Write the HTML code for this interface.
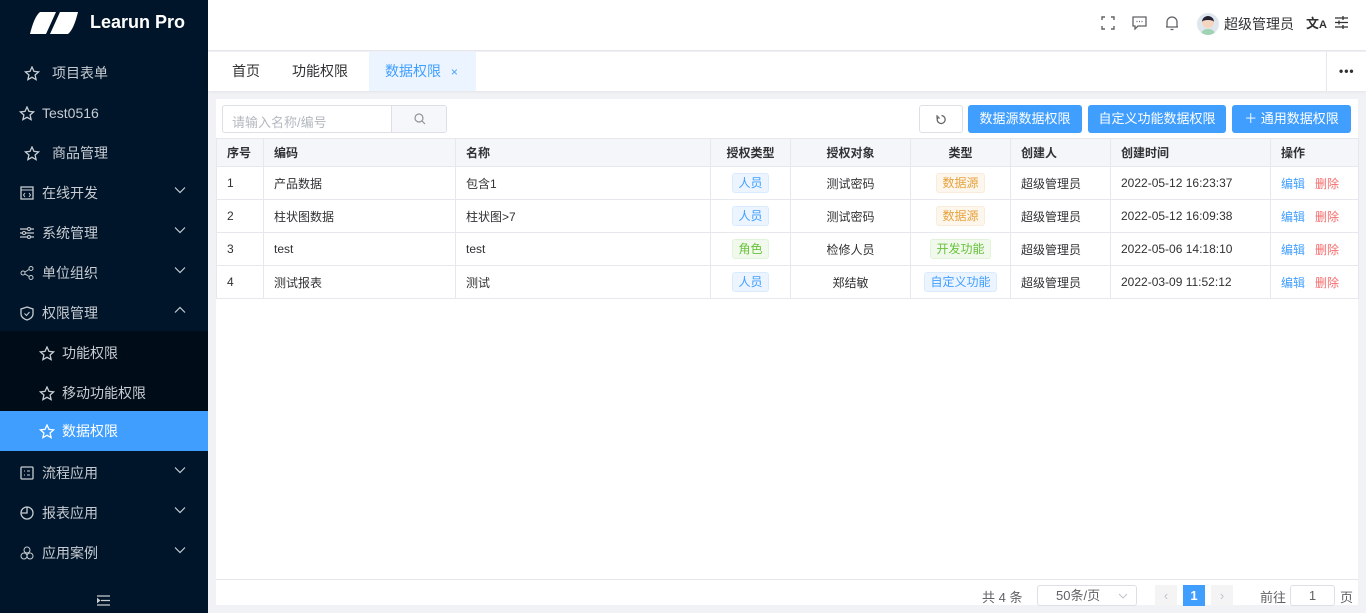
<!DOCTYPE html>
<html><head><meta charset="utf-8"><style>
*{box-sizing:border-box;margin:0;padding:0}
body{width:1366px;height:613px;overflow:hidden;font-family:"Liberation Sans","Noto Sans CJK SC",sans-serif;font-size:13px;color:#303133;background:#f0f2f5;position:relative}
.abs{position:absolute}
#side{left:0;top:0;width:208px;height:613px;background:#001529;color:#c0c4cc}
.mi{position:absolute;left:0;width:208px;height:40px;line-height:40px;font-size:14px;color:#c8ccd2}
.mi svg{position:absolute;top:13px}
.chev{position:absolute;right:22px;top:14px;width:12px;height:8px}
#hdr{left:208px;top:0;width:1158px;height:51px;background:#fff;border-bottom:1px solid #e4e7ed}
#tabs{left:208px;top:52px;width:1158px;height:39px;background:#fff;box-shadow:0 1px 3px rgba(0,0,0,.06)}
.tab{position:absolute;top:0;height:39px;line-height:39px;font-size:14px;color:#303133}
#card{left:216px;top:99px;width:1142px;height:506px;background:#fff}
.btn{position:absolute;top:6px;height:28px;line-height:28px;border-radius:3px;background:#409eff;color:#fff;font-size:13px;text-align:center}
table{border-collapse:collapse;position:absolute;left:0;top:39px;width:1142px;table-layout:fixed}
td,th{border:1px solid #e6e8ee;height:33px;padding:0 10px;font-size:12px;text-align:left;font-weight:normal;white-space:nowrap;vertical-align:middle}
th{height:28px;background:#f4f6f9;font-weight:bold;color:#303133}
.c{text-align:center}
.tag{display:inline-block;height:20px;line-height:18px;padding:0 5px;border:1px solid;border-radius:3px;font-size:12px}
.b{color:#409eff;background:#ecf5ff;border-color:#d9ecff}
.o{color:#e6a23c;background:#fdf6ec;border-color:#faecd8}
.g{color:#67c23a;background:#f0f9eb;border-color:#e1f3d8}
.e{color:#409eff;margin-right:10px}.d{color:#f56c6c}
</style></head><body>
<div id="side" class="abs">
 <svg class="abs" style="left:30px;top:12px" width="48" height="22" viewBox="0 0 48 22"><path d="M10 0H26L16 22H0C2 14 5 4 10 0Z" fill="#fff"/><path d="M30 0H48C46 8 43 18 38 22H20Z" fill="#fff"/></svg>
 <div class="abs" style="left:90px;top:12px;font-size:18px;font-weight:bold;color:#fff">Learun Pro</div>
 <div class="mi" style="top:53px"><svg style="left:24px" width="16" height="15" viewBox="0 0 16 15"><path d="M8 1l2 4.4 4.6.5-3.5 3.1 1 4.6L8 11.3 3.9 13.6l1-4.6L1.4 5.9 6 5.4z" fill="none" stroke="#c8ccd2" stroke-width="1.3"/></svg><span style="position:absolute;left:52px">项目表单</span></div>
 <div class="mi" style="top:93px"><svg style="left:19px" width="16" height="15" viewBox="0 0 16 15"><path d="M8 1l2 4.4 4.6.5-3.5 3.1 1 4.6L8 11.3 3.9 13.6l1-4.6L1.4 5.9 6 5.4z" fill="none" stroke="#c8ccd2" stroke-width="1.3"/></svg><span style="position:absolute;left:42px">Test0516</span></div>
 <div class="mi" style="top:133px"><svg style="left:24px" width="16" height="15" viewBox="0 0 16 15"><path d="M8 1l2 4.4 4.6.5-3.5 3.1 1 4.6L8 11.3 3.9 13.6l1-4.6L1.4 5.9 6 5.4z" fill="none" stroke="#c8ccd2" stroke-width="1.3"/></svg><span style="position:absolute;left:52px">商品管理</span></div>
 <div class="mi" style="top:173px"><svg style="left:20px" width="14" height="14" viewBox="0 0 14 14"><rect x="1" y="1" width="12" height="12" fill="none" stroke="#c8ccd2" stroke-width="1.3"/><path d="M1 4h12M5 7l-1.5 2 1.5 2M9 7l1.5 2-1.5 2" fill="none" stroke="#c8ccd2"/></svg><span style="position:absolute;left:42px">在线开发</span><svg class="chev" viewBox="0 0 12 8"><path d="M1 1.5l5 5 5-5" fill="none" stroke="#c8ccd2" stroke-width="1.2"/></svg></div>
 <div class="mi" style="top:213px"><svg style="left:20px" width="14" height="14" viewBox="0 0 14 14"><path d="M0 3h14M0 7h14M0 11h14" stroke="#c8ccd2" stroke-width="1.3"/><circle cx="9" cy="3" r="1.5" fill="#001529" stroke="#c8ccd2"/><circle cx="4" cy="7" r="1.5" fill="#001529" stroke="#c8ccd2"/><circle cx="9" cy="11" r="1.5" fill="#001529" stroke="#c8ccd2"/></svg><span style="position:absolute;left:42px">系统管理</span><svg class="chev" viewBox="0 0 12 8"><path d="M1 1.5l5 5 5-5" fill="none" stroke="#c8ccd2" stroke-width="1.2"/></svg></div>
 <div class="mi" style="top:253px"><svg style="left:20px" width="14" height="14" viewBox="0 0 14 14"><circle cx="3" cy="7" r="2" fill="none" stroke="#c8ccd2"/><circle cx="11" cy="2.5" r="2" fill="none" stroke="#c8ccd2"/><circle cx="11" cy="11.5" r="2" fill="none" stroke="#c8ccd2"/><path d="M5 6l4-2.5M5 8l4 2.5" stroke="#c8ccd2"/></svg><span style="position:absolute;left:42px">单位组织</span><svg class="chev" viewBox="0 0 12 8"><path d="M1 1.5l5 5 5-5" fill="none" stroke="#c8ccd2" stroke-width="1.2"/></svg></div>
 <div class="mi" style="top:293px"><svg style="left:20px" width="14" height="15" viewBox="0 0 14 15"><path d="M7 1l6 2v5c0 3-3 5-6 6-3-1-6-3-6-6V3z" fill="none" stroke="#c8ccd2" stroke-width="1.3"/><path d="M4.5 7.5l2 2 3-3.5" fill="none" stroke="#c8ccd2"/></svg><span style="position:absolute;left:42px">权限管理</span><svg class="chev" viewBox="0 0 12 8"><path d="M1 6.5l5-5 5 5" fill="none" stroke="#c8ccd2" stroke-width="1.2"/></svg></div>
 <div class="abs" style="left:0;top:331px;width:208px;height:80px;background:#000c17"></div>
 <div class="mi" style="top:333px"><svg style="left:39px" width="16" height="15" viewBox="0 0 16 15"><path d="M8 1l2 4.4 4.6.5-3.5 3.1 1 4.6L8 11.3 3.9 13.6l1-4.6L1.4 5.9 6 5.4z" fill="none" stroke="#c8ccd2" stroke-width="1.3"/></svg><span style="position:absolute;left:62px">功能权限</span></div>
 <div class="mi" style="top:373px"><svg style="left:39px" width="16" height="15" viewBox="0 0 16 15"><path d="M8 1l2 4.4 4.6.5-3.5 3.1 1 4.6L8 11.3 3.9 13.6l1-4.6L1.4 5.9 6 5.4z" fill="none" stroke="#c8ccd2" stroke-width="1.3"/></svg><span style="position:absolute;left:62px">移动功能权限</span></div>
 <div class="mi" style="top:411px;background:#409eff;color:#fff"><svg style="left:39px" width="16" height="15" viewBox="0 0 16 15"><path d="M8 1l2 4.4 4.6.5-3.5 3.1 1 4.6L8 11.3 3.9 13.6l1-4.6L1.4 5.9 6 5.4z" fill="none" stroke="#fff" stroke-width="1.3"/></svg><span style="position:absolute;left:62px">数据权限</span></div>
 <div class="mi" style="top:453px"><svg style="left:20px" width="14" height="14" viewBox="0 0 14 14"><rect x="1" y="1" width="12" height="12" rx="1" fill="none" stroke="#c8ccd2" stroke-width="1.3"/><path d="M4 5h1M4 9h1M7 5h3M7 9h3" stroke="#c8ccd2"/></svg><span style="position:absolute;left:42px">流程应用</span><svg class="chev" viewBox="0 0 12 8"><path d="M1 1.5l5 5 5-5" fill="none" stroke="#c8ccd2" stroke-width="1.2"/></svg></div>
 <div class="mi" style="top:493px"><svg style="left:20px" width="14" height="14" viewBox="0 0 14 14"><circle cx="7" cy="7" r="6" fill="none" stroke="#c8ccd2" stroke-width="1.3"/><path d="M7 1v6H1" fill="none" stroke="#c8ccd2" stroke-width="1.3"/></svg><span style="position:absolute;left:42px">报表应用</span><svg class="chev" viewBox="0 0 12 8"><path d="M1 1.5l5 5 5-5" fill="none" stroke="#c8ccd2" stroke-width="1.2"/></svg></div>
 <div class="mi" style="top:533px"><svg style="left:20px" width="14" height="14" viewBox="0 0 14 14"><circle cx="7" cy="4" r="3" fill="none" stroke="#c8ccd2"/><circle cx="4" cy="10" r="3" fill="none" stroke="#c8ccd2"/><circle cx="10" cy="10" r="3" fill="none" stroke="#c8ccd2"/></svg><span style="position:absolute;left:42px">应用案例</span><svg class="chev" viewBox="0 0 12 8"><path d="M1 1.5l5 5 5-5" fill="none" stroke="#c8ccd2" stroke-width="1.2"/></svg></div>
 <svg class="abs" style="left:97px;top:595px" width="13" height="11" viewBox="0 0 13 11"><path d="M0 1h13M4 5.5h9M0 10h13M0 3.5l2.5 2-2.5 2z" stroke="#c8ccd2" stroke-width="1.3" fill="#c8ccd2"/></svg>
</div>
<div id="hdr" class="abs">
 <svg class="abs" style="left:893px;top:16px" width="14" height="14" viewBox="0 0 14 14"><path d="M1 4V1h3M10 1h3v3M13 10v3h-3M4 13H1v-3" fill="none" stroke="#606266" stroke-width="1.4"/></svg>
 <svg class="abs" style="left:924px;top:16px" width="15" height="14" viewBox="0 0 15 14"><path d="M1 1h13v9H6l-3 3v-3H1z" fill="none" stroke="#606266" stroke-width="1.3"/><path d="M4.5 5.5h1M7 5.5h1M9.5 5.5h1" stroke="#606266" stroke-width="1.3"/></svg>
 <svg class="abs" style="left:957px;top:15px" width="14" height="16" viewBox="0 0 14 16"><path d="M2 12V7a5 5 0 0 1 10 0v5H1h12M5.5 14.5h3" fill="none" stroke="#606266" stroke-width="1.3"/></svg>
 <div class="abs" style="left:989px;top:13px;width:22px;height:22px;border-radius:50%;background:#dfe6ee;overflow:hidden"><div style="position:absolute;left:5px;top:3px;width:12px;height:12px;border-radius:50%;background:#f5d5c0;border-top:4px solid #223"></div><div style="position:absolute;left:4px;top:16px;width:14px;height:8px;background:#9fd3b2;border-radius:6px 6px 0 0"></div></div>
 <div class="abs" style="left:1016px;top:14px;font-size:14px;color:#303133">超级管理员</div>
 <div class="abs" style="left:1098px;top:13px;font-size:13px;font-weight:bold;color:#303133">文<span style="font-size:11px">A</span></div>
 <svg class="abs" style="left:1127px;top:16px" width="13" height="13" viewBox="0 0 13 13"><path d="M0 2h13M0 6.5h13M0 11h13" stroke="#303133" stroke-width="1.3"/><path d="M8 0v4M4 4.5v4M8 9v4" stroke="#303133" stroke-width="1.3"/></svg>
</div>
<div id="tabs" class="abs">
 <div class="tab" style="left:24px">首页</div>
 <div class="tab" style="left:84px">功能权限</div>
 <div class="tab" style="left:161px;width:107px;background:#ecf5ff;color:#409eff;padding-left:16px">数据权限 <span style="font-size:12px;margin-left:6px">×</span></div>
 <div class="abs" style="left:1118px;top:0;width:1px;height:39px;background:#e4e7ed"></div>
 <div class="tab" style="left:1131px;font-weight:bold;letter-spacing:1px;font-size:12px">•••</div>
</div>
<div id="card" class="abs">
 <div class="abs" style="left:6px;top:6px;width:225px;height:28px;border:1px solid #dcdfe6;border-radius:3px;overflow:hidden"><span style="position:absolute;left:9px;top:6px;color:#b4b8bf;font-size:13px">请输入名称/编号</span><div style="position:absolute;left:168px;top:0;width:56px;height:26px;background:#f5f7fa;border-left:1px solid #dcdfe6"><svg style="position:absolute;left:22px;top:7px" width="12" height="12" viewBox="0 0 12 12"><circle cx="5" cy="5" r="4" fill="none" stroke="#909399" stroke-width="1.2"/><path d="M8 8l3 3" stroke="#909399" stroke-width="1.2"/></svg></div></div>
 <div class="abs" style="left:703px;top:6px;width:44px;height:28px;border:1px solid #dcdfe6;border-radius:3px"><svg style="position:absolute;left:16px;top:8px" width="11" height="11" viewBox="0 0 11 11"><path d="M2.5 2.5A4 4 0 1 0 5.5 1.5" fill="none" stroke="#606266" stroke-width="1.2"/><path d="M1 1v3h3" fill="none" stroke="#606266" stroke-width="1.1"/></svg></div>
 <div class="btn" style="left:752px;width:114px">数据源数据权限</div>
 <div class="btn" style="left:872px;width:138px">自定义功能数据权限</div>
 <div class="btn" style="left:1016px;width:119px">＋ 通用数据权限</div>
 <table>
  <colgroup><col style="width:47px"><col style="width:192px"><col style="width:255px"><col style="width:80px"><col style="width:120px"><col style="width:100px"><col style="width:100px"><col style="width:160px"><col style="width:88px"></colgroup>
  <tr><th>序号</th><th>编码</th><th>名称</th><th class="c">授权类型</th><th class="c">授权对象</th><th class="c">类型</th><th>创建人</th><th>创建时间</th><th>操作</th></tr>
  <tr><td>1</td><td>产品数据</td><td>包含1</td><td class="c"><span class="tag b">人员</span></td><td class="c">测试密码</td><td class="c"><span class="tag o">数据源</span></td><td>超级管理员</td><td>2022-05-12 16:23:37</td><td><span class="e">编辑</span><span class="d">删除</span></td></tr>
  <tr><td>2</td><td>柱状图数据</td><td>柱状图&gt;7</td><td class="c"><span class="tag b">人员</span></td><td class="c">测试密码</td><td class="c"><span class="tag o">数据源</span></td><td>超级管理员</td><td>2022-05-12 16:09:38</td><td><span class="e">编辑</span><span class="d">删除</span></td></tr>
  <tr><td>3</td><td>test</td><td>test</td><td class="c"><span class="tag g">角色</span></td><td class="c">检修人员</td><td class="c"><span class="tag g">开发功能</span></td><td>超级管理员</td><td>2022-05-06 14:18:10</td><td><span class="e">编辑</span><span class="d">删除</span></td></tr>
  <tr><td>4</td><td>测试报表</td><td>测试</td><td class="c"><span class="tag b">人员</span></td><td class="c">郑结敏</td><td class="c"><span class="tag b">自定义功能</span></td><td>超级管理员</td><td>2022-03-09 11:52:12</td><td><span class="e">编辑</span><span class="d">删除</span></td></tr>
 </table>
 <div class="abs" style="left:0;top:480px;width:1142px;height:1px;background:#e4e7ed"></div>
 <div class="abs" style="left:766px;top:488px;color:#606266">共 4 条</div>
 <div class="abs" style="left:821px;top:486px;width:100px;height:21px;border:1px solid #dcdfe6;border-radius:3px;color:#606266;padding-left:18px;line-height:19px">50条/页<svg style="position:absolute;right:8px;top:7px" width="10" height="6" viewBox="0 0 10 6"><path d="M1 1l4 4 4-4" fill="none" stroke="#c0c4cc"/></svg></div>
 <div class="abs" style="left:939px;top:486px;width:22px;height:21px;background:#f4f4f5;color:#c0c4cc;text-align:center;line-height:21px">‹</div>
 <div class="abs" style="left:967px;top:486px;width:22px;height:21px;background:#409eff;color:#fff;font-weight:bold;text-align:center;line-height:21px">1</div>
 <div class="abs" style="left:995px;top:486px;width:22px;height:21px;background:#f4f4f5;color:#c0c4cc;text-align:center;line-height:21px">›</div>
 <div class="abs" style="left:1044px;top:488px;color:#606266">前往</div>
 <div class="abs" style="left:1074px;top:486px;width:45px;height:21px;border:1px solid #dcdfe6;border-radius:3px;text-align:center;line-height:19px;color:#606266">1</div>
 <div class="abs" style="left:1124px;top:488px;color:#606266">页</div>
</div>
</body></html>
